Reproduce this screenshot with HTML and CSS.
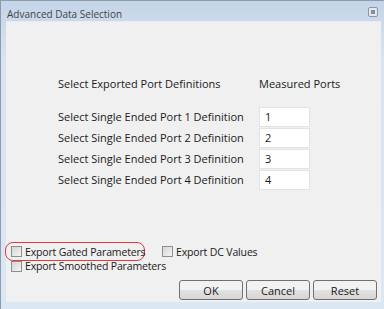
FILE: index.html
```html
<!DOCTYPE html>
<html lang="en">
	<head>
		<meta charset="UTF-8" />
		<meta name="viewport" content="width=device-width, initial-scale=1.0" />
		<title>Advanced Data Selection</title>
		<link rel="stylesheet" href="styles.css">
	</head>
	<body>
		<div class="window">
			<div class="titlebar">
				<span class="title">Advanced Data Selection</span>
				<span class="restore"><span class="restore-dot"></span></span>
			</div>
			<div class="client">
				<div class="ports-head">
					<span class="head-label">Select Exported Port Definitions</span>
					<span>Measured Ports</span>
				</div>
				<div class="ports">
					<div class="port-label">Select Single Ended Port 1 Definition</div>
					<div class="port-box">1</div>
					<div class="port-label">Select Single Ended Port 2 Definition</div>
					<div class="port-box">2</div>
					<div class="port-label">Select Single Ended Port 3 Definition</div>
					<div class="port-box">3</div>
					<div class="port-label">Select Single Ended Port 4 Definition</div>
					<div class="port-box">4</div>
				</div>

				<div class="options">
					<div class="option-row">
						<label class="check check-marked"><span class="box"></span>Export Gated Parameters</label>
						<label class="check check-dc"><span class="box"></span>Export DC Values</label>
					</div>
					<label class="check check-low"><span class="box"></span>Export Smoothed Parameters</label>
				</div>

				<div class="buttons">
					<button class="btn">OK</button>
					<button class="btn">Cancel</button>
					<button class="btn">Reset</button>
				</div>
			</div>
		</div>
	</body>
</html>
```

FILE: styles.css
```css
* {
	box-sizing: border-box;
}
html,
body {
	margin: 0;
	padding: 0;
	background: #fff;
}
body {
	font-family: "Open Sans", "Noto Sans", sans-serif;
	font-size: 11px;
	color: #1a1a1a;
}
.window {
	width: 384px;
	height: 309px;
	display: flex;
	flex-direction: column;
	padding: 0 3px 7px 5px;
	border-top: 1px solid #8e9bab;
	border-left: 1px solid #8e9bab;
	background: linear-gradient(#c4d5e8, #d8e4f1 60px, #dbe7f3);
}
.titlebar {
	height: 20px;
	flex-shrink: 0;
	display: flex;
	align-items: center;
	justify-content: space-between;
	padding: 0 3px 0 1px;
}
.title {
	font-size: 10px;
	color: #444;
	margin-top: 5px;
}
.restore {
	width: 10px;
	height: 10px;
	margin-top: 1px;
	border: 1px solid #8d97a4;
	border-radius: 2px;
	background: #e1e8f0;
	display: flex;
	align-items: center;
	justify-content: center;
}
.restore-dot {
	width: 4px;
	height: 4px;
	background: #8c8c8c;
}
.client {
	flex: 1;
	display: flex;
	flex-direction: column;
	background: #f0f0f0;
	border-top: 1px solid #e6ecf3;
}
.ports-head {
	display: flex;
	height: 16px;
	line-height: 16px;
	margin: 54px 0 15px 52px;
	white-space: nowrap;
}
.head-label {
	width: 201px;
}
.ports {
	display: grid;
	grid-template-columns: 201px 51px;
	grid-auto-rows: 20px;
	row-gap: 1px;
	margin-left: 52px;
}
.port-label {
	line-height: 20px;
	white-space: nowrap;
}
.port-box {
	background: #fff;
	border: 1px solid #e2e3e5;
	padding-left: 5px;
	line-height: 18px;
}
.options {
	margin: auto 0 0 -1px;
	display: flex;
	flex-direction: column;
	font-size: 10.5px;
	letter-spacing: -0.15px;
}
.option-row {
	display: flex;
	align-items: center;
	gap: 17px;
	height: 19px;
}
.check {
	display: flex;
	align-items: center;
	gap: 3px;
	padding-left: 5px;
	white-space: nowrap;
}
.check-marked {
	height: 19px;
	width: 140px;
	border: 1px solid #e23a3a;
	border-radius: 8px;
}
.check-dc {
	padding-left: 0;
}
.check-low {
	height: 10px;
	padding-left: 6px;
}
.box {
	width: 11px;
	height: 11px;
	flex-shrink: 0;
	border: 1px solid #8e8f8f;
	background: linear-gradient(135deg, #d4d4d4, #f4f4f4);
}
.buttons {
	display: flex;
	justify-content: flex-end;
	gap: 3px;
	padding: 9px 4px 2px 0;
}
.btn {
	width: 64px;
	height: 20px;
	font-family: inherit;
	font-size: 11px;
	color: #1a1a1a;
	border: 1px solid #707070;
	border-radius: 3px;
	background: linear-gradient(#f2f2f2 50%, #e2e2e2 50%, #d6d6d6);
}
```
